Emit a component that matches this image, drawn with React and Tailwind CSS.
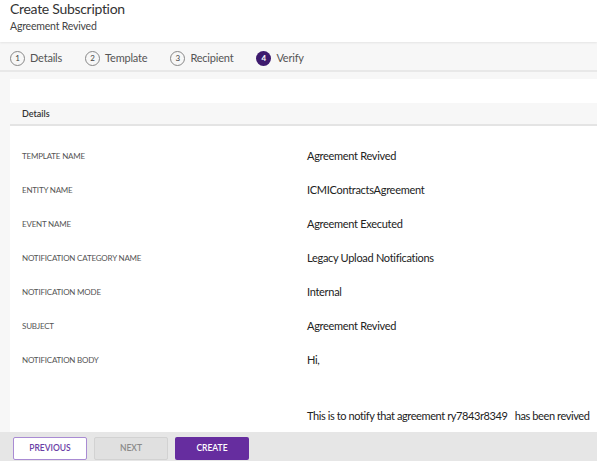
import React from "react";

const steps = [
  { n: 1, label: "Details" },
  { n: 2, label: "Template" },
  { n: 3, label: "Recipient" },
  { n: 4, label: "Verify", active: true },
];

const rows = [
  ["TEMPLATE NAME", "Agreement Revived"],
  ["ENTITY NAME", "ICMIContractsAgreement"],
  ["EVENT NAME", "Agreement Executed"],
  ["NOTIFICATION CATEGORY NAME", "Legacy Upload Notifications"],
  ["NOTIFICATION MODE", "Internal"],
  ["SUBJECT", "Agreement Revived"],
  ["NOTIFICATION BODY", "Hi,"],
];

const App = () => {
  return (
    <div
      className="h-screen flex flex-col bg-[#f7f7f7] overflow-hidden"
      style={{ fontFamily: "Lato, 'Noto Sans', sans-serif" }}
    >
      <div className="bg-white h-[42px] px-[10px] shadow-[0_1px_2px_rgba(0,0,0,0.08)] relative z-10">
        <div className="text-[14px] leading-[18px] tracking-[-0.3px] text-[#333]">Create Subscription</div>
        <div className="text-[10.5px] leading-[12px] mt-[2px] tracking-[-0.2px] text-[#444]">Agreement Revived</div>
      </div>

      <div className="h-[30px] flex items-center pl-[10px] pt-[4px] border-b-2 border-[#e8e8e8] bg-[#f7f7f7]">
        {steps.map(s => (
          <div key={s.n} className="flex items-center mr-[23px]">
            <span
              className={
                s.active
                  ? "w-[15px] h-[15px] rounded-full bg-[#3d1a6e] text-white text-[8px] flex items-center justify-center font-bold"
                  : "w-[15px] h-[15px] rounded-full border border-[#888] text-[#444] text-[8px] flex items-center justify-center"
              }
            >
              {s.n}
            </span>
            <span className="ml-[5px] text-[11px] tracking-[-0.2px] text-[#555]">{s.label}</span>
          </div>
        ))}
      </div>

      <div className="flex-1 pl-[10px] pt-[7px] overflow-hidden">
        <div className="bg-white h-full">
          <div className="h-[24px]" />
          <div className="h-[23px] bg-[#f7f7f7] border-b-2 border-[#e4e4e4] flex items-center pl-[12px] text-[9px] font-semibold text-[#333]">
            Details
          </div>
          <div className="pt-[13px]">
            {rows.map(([k, v]) => (
              <div key={k} className="h-[34px] flex items-center pl-[12px]">
                <div className="w-[285px] shrink-0 text-[8px] tracking-[-0.2px] text-[#555]">{k}</div>
                <div className="text-[11px] tracking-[-0.3px] text-[#222]">{v}</div>
              </div>
            ))}
            <div className="h-[22px]" />
            <div className="h-[34px] flex items-center pl-[297px]">
              <div className="whitespace-pre text-[11px] tracking-[-0.4px] text-[#222]">
                This is to notify that agreement ry7843r8349   has been revived
              </div>
            </div>
          </div>
        </div>
      </div>

      <div className="h-[29px] shrink-0 bg-[#e6e6e6] flex items-start pt-[5px] pl-[13px] gap-[7px]">
        <button className="w-[74px] h-[23px] bg-white border border-[#a98bd3] rounded-[2px] text-[8.5px] font-semibold text-[#6a3ea6]">
          PREVIOUS
        </button>
        <button className="w-[74px] h-[23px] bg-[#e0e0e0] border border-[#d2d2d2] rounded-[2px] text-[8.5px] font-semibold text-[#8a8a8a]">
          NEXT
        </button>
        <button className="w-[74px] h-[23px] bg-[#662d9f] rounded-[2px] text-[8.5px] font-semibold text-white">
          CREATE
        </button>
      </div>
    </div>
  );
};

export default App;
